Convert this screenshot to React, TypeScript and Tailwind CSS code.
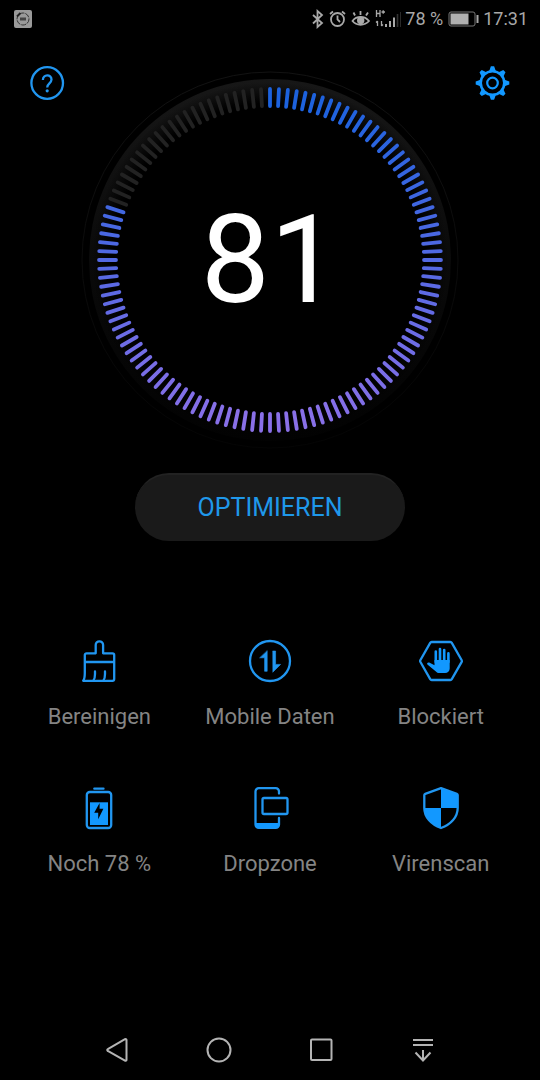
import type { ReactNode } from 'react'

const TICK_COUNT = 120
const SCORE = 81

function mix(from: number[], to: number[], t: number) {
  return `rgb(${from.map((c, i) => Math.round(c + (to[i] - c) * t)).join(',')})`
}

function Dial() {
  const lit = Math.round((SCORE / 100) * TICK_COUNT)
  const ticks = Array.from({ length: TICK_COUNT }, (_, i) => {
    const angle = i * 3
    // blue at the top, violet at the bottom
    const t = (1 - Math.cos((angle * Math.PI) / 180)) / 2
    return { angle, color: i < lit ? mix([28, 98, 222], [138, 112, 232], t) : '#222222' }
  })

  return (
    <div className="grid place-items-center">
      <svg viewBox="-190 -190 380 380" className="col-start-1 row-start-1 w-[380px]" aria-hidden="true">
        <defs>
          <linearGradient id="disc" x1="0" y1="0" x2="0" y2="1">
            <stop offset="0" stopColor="#171717" />
            <stop offset="0.5" stopColor="#0a0a0a" />
            <stop offset="1" stopColor="#020202" />
          </linearGradient>
          <linearGradient id="rim" x1="0" y1="0" x2="0" y2="1">
            <stop offset="0" stopColor="#121212" />
            <stop offset="1" stopColor="#040404" />
          </linearGradient>
          <radialGradient id="hole">
            <stop offset="0.88" stopColor="#000000" />
            <stop offset="1" stopColor="#000000" stopOpacity="0" />
          </radialGradient>
        </defs>
        <circle r="188" fill="none" stroke="url(#rim)" strokeWidth="1" />
        <circle r="181" fill="url(#disc)" />
        <circle r="178" fill="url(#hole)" />
        {ticks.map(({ angle, color }) => (
          <line
            key={angle}
            y1="-171"
            y2="-154"
            stroke={color}
            strokeWidth="3.8"
            strokeLinecap="round"
            transform={`rotate(${angle})`}
          />
        ))}
      </svg>
      <span className="col-start-1 row-start-1 text-[123px] leading-none text-white">{SCORE}</span>
    </div>
  )
}

function Icon({ children }: { children: ReactNode }) {
  return (
    <svg
      viewBox="0 0 44 44"
      className="size-11 overflow-visible"
      fill="none"
      stroke="#2196f0"
      strokeWidth="2.3"
      strokeLinejoin="round"
      strokeLinecap="round"
      aria-hidden="true"
    >
      {children}
    </svg>
  )
}

const tools = [
  {
    name: 'Bereinigen',
    icon: (
      <Icon>
        <path d="M7.8 23V16a1.7 1.7 0 0 1 1.7-1.7H18.7V6a3.7 3.7 0 0 1 7.4 0V14.3H35.5a1.7 1.7 0 0 1 1.7 1.7V40a1.8 1.8 0 0 1-1.8 1.8H6.2C7.6 40 7.8 37 7.8 34ZM7.8 23H37.2" />
        <path d="M18 32.5V35c0 3-.4 5-1.6 6.6M28 32.5V35c0 3-.4 5-1.6 6.6" />
      </Icon>
    ),
  },
  {
    name: 'Mobile Daten',
    icon: (
      <Icon>
        <circle cx="22" cy="22" r="20" />
        <g fill="#2196f0" strokeWidth="0.6">
          <path d="M19.2 12V32.3H16.6V18.8H12Z" />
          <path d="M25 12H27.6V25.4H32.6L25 33Z" />
        </g>
      </Icon>
    ),
  },
  {
    name: 'Blockiert',
    icon: (
      <Icon>
        <path d="M12.7 3H31.3a1.8 1.8 0 0 1 1.5.9L42.7 21.2a1.6 1.6 0 0 1 0 1.6L32.8 40.1a1.8 1.8 0 0 1-1.5.9H12.7a1.8 1.8 0 0 1-1.5-.9L1.3 22.8a1.6 1.6 0 0 1 0-1.6L11.2 3.9A1.8 1.8 0 0 1 12.7 3Z" />
        <path d="M16.8 12.5V23M21 10V23M25.2 11V23M29.4 14.4V23" stroke="#1298ff" strokeWidth="2.6" />
        <path
          d="M15.5 21H30.7V29.5a4.6 4.6 0 0 1-4.6 4.6H20.5c-1.6 0-2.8-.6-3.9-1.9L8.4 25.4c-.8-1.2.4-2.3 1.8-1.8L15.5 26.3Z"
          fill="#1298ff"
          stroke="none"
        />
      </Icon>
    ),
  },
  {
    name: 'Noch 78 %',
    icon: (
      <Icon>
        <path d="M17.3 2.7H26.5" />
        <rect x="9.8" y="6" width="24.4" height="36" rx="3" />
        <path d="M13 16.3H31V39H13Z" fill="#1298ff" stroke="none" />
        <path d="M22.6 17 17.2 26.8H21.2V33.2L26.4 22.8H22.6Z" fill="#000000" stroke="none" />
      </Icon>
    ),
  },
  {
    name: 'Dropzone',
    icon: (
      <Icon>
        <path d="M31 7.5V5.5A3.3 3.3 0 0 0 27.7 2.2H10.8A3.3 3.3 0 0 0 7.5 5.5V38.5A3.3 3.3 0 0 0 10.8 41.8H27.7A3.3 3.3 0 0 0 31 38.5V32" />
        <path d="M7.5 37H31V39a3 3 0 0 1-3 3H10.5a3 3 0 0 1-3-3Z" fill="#1298ff" stroke="none" />
        <rect x="14.5" y="12" width="25" height="16" rx="1.5" />
      </Icon>
    ),
  },
  {
    name: 'Virenscan',
    icon: (
      <Icon>
        <path d="M22 2.2 37.8 7.8a1.4 1.4 0 0 1 .9 1.3V22C38.7 31 32 38.500 22 42 12 38.500 5.300 31 5.300 22V9.100a1.400 1.400 0 0 1 .9-1.300Z" />
        <path d="M22 2.200 38.700 8.200V22H5.300C5.300 31 12 38.500 22 42Z" fill="#1298ff" stroke="none" />
      </Icon>
    ),
  },
]

function StatusBar() {
  return (
    <header className="flex h-[38px] items-center pr-3 pl-3.5 text-lg text-[#a8a8a8]">
      <svg viewBox="0 0 18 18" className="size-[18px]" aria-hidden="true">
        <rect width="18" height="18" rx="2" fill="#9a9a9a" />
        <circle cx="9" cy="9" r="6" fill="none" stroke="#333333" strokeWidth="1" strokeDasharray="5 1" />
        <path d="M3 6.5 6.5 3" stroke="#222222" strokeWidth="2" />
        <path d="M6 7.5H12V10.5H6Z" fill="#444444" />
      </svg>
      <div className="ml-auto flex items-center gap-1">
        <svg viewBox="0 0 90 20" className="h-5 w-[90px]" fill="none" stroke="#a8a8a8" strokeWidth="1.8" aria-hidden="true">
          <path d="M2 6 11 14 6.500 18V2L11 6 2 14.500" />
          <circle cx="26.500" cy="10.500" r="6.500" />
          <path d="M26.500 6.500V10.500L29 13M19 5 22 2.500M34 5 31 2.500" />
          <path d="M41.500 12C45.500 6.500 53.500 6.500 58 12 53.500 17 45.500 17 41.500 12ZM49.500 6V2M44 6.500 42.500 3.500M55 6.500 57 3.500" />
          <circle cx="49.700" cy="11.500" r="2.800" fill="#a8a8a8" />
          <path d="M65.500 1V8M69 1V8M65.500 4.500H69M70.500 3H74M72.200 1.200V4.800" strokeWidth="1.300" />
          <path d="M66.500 12V17M65 13.500 66.500 12M70.500 12V17M72 15.500 70.500 17" strokeWidth="1.300" />
          <path d="M75 15V18M79 12V18M83 8.500V18" strokeWidth="2" />
          <path d="M86.500 5V18M90 3V18" stroke="#333333" strokeWidth="1.600" />
        </svg>
        <span>78 %</span>
        <svg viewBox="0 0 32 16" className="h-4 w-8" aria-hidden="true">
          <rect x="2" y="1" width="26" height="14" rx="2" fill="none" stroke="#777777" />
          <rect x="3.500" y="2.500" width="18" height="11" fill="#b0b0b0" />
          <path d="M30.500 4V12" stroke="#a8a8a8" strokeWidth="2" />
        </svg>
        <span>17:31</span>
      </div>
    </header>
  )
}

function TopActions() {
  return (
    <div className="flex justify-between px-[30px]">
      <button className="size-9 cursor-pointer" aria-label="Hilfe">
        <svg viewBox="0 0 36 36" className="size-9" fill="none" stroke="#2196f0" strokeWidth="2.3" aria-hidden="true">
          <circle cx="17.2" cy="18" r="15.8" />
          <path d="M12.900 15C12.900 9 21.500 9 21.500 14.600 21.500 18.400 17.200 18.400 17.200 22.500" />
          <circle cx="17.2" cy="25.8" r="1.600" fill="#2196f0" stroke="none" />
        </svg>
      </button>
      <button className="size-9 cursor-pointer" aria-label="Einstellungen">
        <svg viewBox="-18.500 -18 36 36" className="size-9" fill="none" stroke="#1298ff" aria-hidden="true">
          <circle r="11.8" strokeWidth="2.600" />
          <circle r="5.300" strokeWidth="2.200" />
          {[0, 45, 90, 135, 180, 225, 270, 315].map((angle) => (
            <path
              key={angle}
              d="M-1.600-16.800H1.600L3.300-12H-3.300Z"
              fill="#1298ff"
              stroke="none"
              transform={`rotate(${angle})`}
            />
          ))}
        </svg>
      </button>
    </div>
  )
}

const navButtons = [
  { label: 'Zurück', icon: <path d="M22.500 2.900V22.900a1 1 0 0 1-1.500.8L3.800 14a1 1 0 0 1 0-1.800L21 2.100a1 1 0 0 1 1.500.8Z" /> },
  { label: 'Start', icon: <circle cx="13" cy="13" r="11.500" /> },
  { label: 'Übersicht', icon: <rect x="3" y="2.500" width="20.500" height="20.500" rx="1" /> },
  { label: 'Benachrichtigungen', icon: <path d="M3 3H23M3 8H23M13 13V23.500M5.500 15.500 13 23.500 20.500 15.500" /> },
]

export default function App() {
  return (
    <div className="flex min-h-screen flex-col bg-black font-['Roboto',sans-serif]">
      <StatusBar />
      <main className="flex flex-1 flex-col">
        <div className="grid pt-[27px]">
          <div className="z-10 col-start-1 row-start-1">
            <TopActions />
          </div>
          <div className="col-start-1 row-start-1 pt-[5px]">
            <Dial />
          </div>
        </div>
        <button className="mx-auto mt-[23px] h-[68px] w-1/2 cursor-pointer rounded-full border-t-2 border-[#222222] bg-[#1a1a1a] text-[25px] text-[#1f98ea]">
          OPTIMIEREN
        </button>
        <div className="mt-[98px] grid grid-cols-3 gap-y-[45px] px-3.5">
          {tools.map((tool) => (
            <button key={tool.name} className="flex cursor-pointer flex-col items-center gap-2.5">
              {tool.icon}
              <span className="text-[22px] leading-12 whitespace-nowrap text-[#848484]">{tool.name}</span>
            </button>
          ))}
        </div>
      </main>
      <nav className="grid h-[60px] grid-cols-4 items-center px-[66px]">
        {navButtons.map((button) => (
          <button key={button.label} className="mx-auto cursor-pointer" aria-label={button.label}>
            <svg
              viewBox="0 0 26 26"
              className="size-[26px]"
              fill="none"
              stroke="#b4b4b4"
              strokeWidth="2"
              aria-hidden="true"
            >
              {button.icon}
            </svg>
          </button>
        ))}
      </nav>
    </div>
  )
}
